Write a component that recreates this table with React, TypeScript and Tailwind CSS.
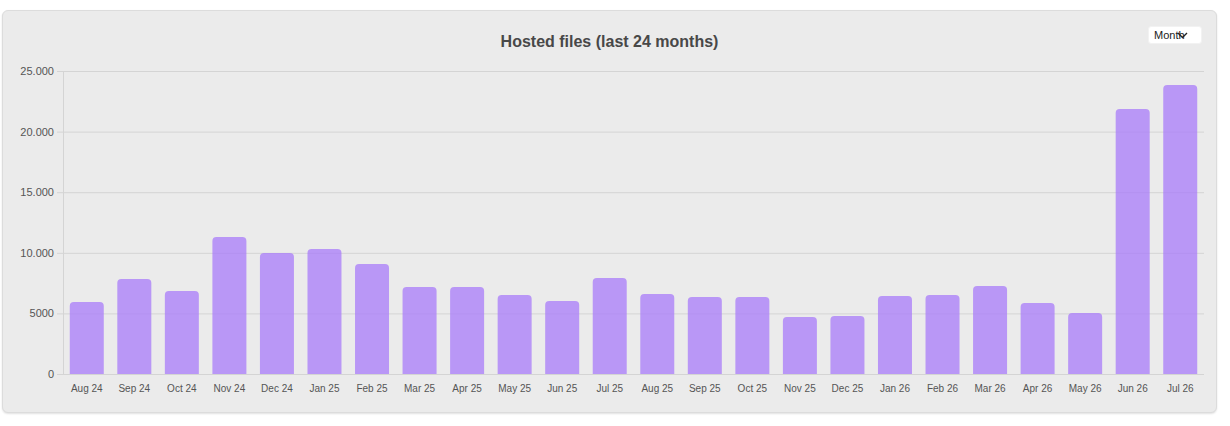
import React from 'react';

const DATA: { label: string; value: number }[] = [
  { label: 'Aug 24', value: 5940 },
  { label: 'Sep 24', value: 7840 },
  { label: 'Oct 24', value: 6850 },
  { label: 'Nov 24', value: 11300 },
  { label: 'Dec 24', value: 9980 },
  { label: 'Jan 25', value: 10310 },
  { label: 'Feb 25', value: 9080 },
  { label: 'Mar 25', value: 7180 },
  { label: 'Apr 25', value: 7180 },
  { label: 'May 25', value: 6520 },
  { label: 'Jun 25', value: 6020 },
  { label: 'Jul 25', value: 7920 },
  { label: 'Aug 25', value: 6600 },
  { label: 'Sep 25', value: 6350 },
  { label: 'Oct 25', value: 6350 },
  { label: 'Nov 25', value: 4700 },
  { label: 'Dec 25', value: 4790 },
  { label: 'Jan 26', value: 6440 },
  { label: 'Feb 26', value: 6520 },
  { label: 'Mar 26', value: 7260 },
  { label: 'Apr 26', value: 5860 },
  { label: 'May 26', value: 5030 },
  { label: 'Jun 26', value: 21860 },
  { label: 'Jul 26', value: 23840 },
];

const TICKS = [
  { v: 0, t: '0' },
  { v: 5000, t: '5000' },
  { v: 10000, t: '10.000' },
  { v: 15000, t: '15.000' },
  { v: 20000, t: '20.000' },
  { v: 25000, t: '25.000' },
];

// plot area inside the svg
const LEFT = 60;
const RIGHT = 1201;
const TOP = 11;
const ZERO = 314;
const MAX = 25000;
const BAR_W = 34;

const yOf = (v: number) => ZERO - (v / MAX) * (ZERO - TOP);

function BarChart() {
  const step = (RIGHT - LEFT) / DATA.length;

  return (
    <svg width="1213" height="352" className="block" style={{ fontFamily: '"Liberation Sans", Arial, sans-serif' }}>
      {/* grid + y labels */}
      {TICKS.map((tick) => (
        <g key={tick.v}>
          <line x1={LEFT - 6} x2={RIGHT} y1={yOf(tick.v) + 0.5} y2={yOf(tick.v) + 0.5} stroke="#d4d4d4" strokeWidth="1" />
          <text x={LEFT - 9} y={yOf(tick.v) + 4} textAnchor="end" fontSize="11" fill="#555">
            {tick.t}
          </text>
        </g>
      ))}
      <line x1={LEFT + 0.5} x2={LEFT + 0.5} y1={TOP} y2={ZERO} stroke="#d4d4d4" strokeWidth="1" />

      {/* bars */}
      {DATA.map((d, i) => {
        const cx = LEFT + step * i + step / 2;
        const y = yOf(d.value);
        const h = ZERO - y;
        const r = 4;
        const x = cx - BAR_W / 2;
        const path = `M${x},${ZERO} L${x},${y + r} Q${x},${y} ${x + r},${y} L${x + BAR_W - r},${y} Q${x + BAR_W},${y} ${x + BAR_W},${y + r} L${x + BAR_W},${ZERO} Z`;
        return (
          <g key={d.label}>
            {h > 0 && <path d={path} fill="rgba(168,123,250,0.75)" />}
            <text x={cx} y={ZERO + 18} textAnchor="middle" fontSize="10" fill="#555">
              {d.label}
            </text>
          </g>
        );
      })}
    </svg>
  );
}

export default function App() {
  return (
    <div className="w-[1230px] h-[426px] bg-white pl-[2px] pt-[10px]">
      <div className="relative w-[1215px] h-[403px] bg-[#ebebeb] border border-[#dcdcdc] rounded-[6px] shadow-[0_1px_2px_rgba(0,0,0,0.12)] flex flex-col">
        <div className="h-[49px] flex items-start justify-center pt-[23px]">
          <h2 className="text-[16px] leading-none font-bold text-[#484848] font-['Liberation_Sans',Arial,sans-serif]">
            Hosted files (last 24 months)
          </h2>
        </div>

        <div className="absolute top-[15px] right-[14px] w-[54px] h-[18px] bg-white rounded-[3px] border border-[#f2f2f2] flex items-center pl-[5px] overflow-hidden">
          <span className="text-[11px] leading-none text-[#222] font-['Liberation_Sans',Arial,sans-serif]">Month</span>
          <svg className="absolute left-[28px] top-[5px]" width="11" height="7" viewBox="0 0 11 7">
            <path d="M1 1 L5.5 5.5 L10 1" fill="none" stroke="#222" strokeWidth="1.4" />
          </svg>
        </div>

        <BarChart />
      </div>
    </div>
  );
}
